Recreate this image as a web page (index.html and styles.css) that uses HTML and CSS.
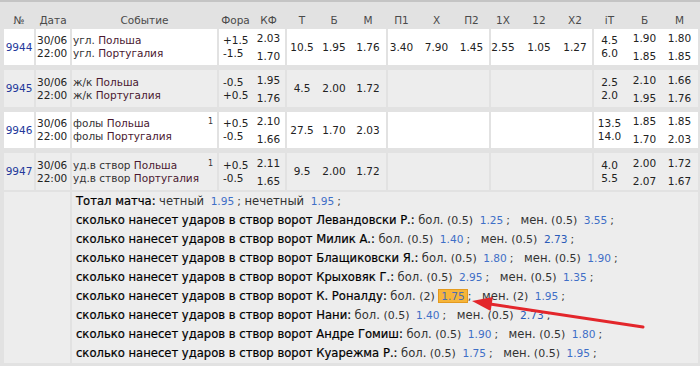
FILE: index.html
```html
<!DOCTYPE html>
<html lang="ru">
<head>
<meta charset="utf-8">
<title>Линия</title>
<link rel="stylesheet" href="styles.css">
</head>
<body>
<div class="wrap">
<table class="lines">
<colgroup><col class="ca"><col class="cb"><col class="cc"><col class="cd"><col class="ce"><col class="cf"><col class="cg"><col class="ch"></colgroup>
<thead>
<tr>
<th>№</th><th>Дата</th><th>Событие</th>
<th><div class="g gd"><div class="fo">Фора</div><div class="kf">КФ</div></div></th>
<th><div class="g ge"><div>Т</div><div>Б</div><div>М</div></div></th>
<th><div class="g gf"><div>П1</div><div>Х</div><div>П2</div></div></th>
<th><div class="g gg"><div>1Х</div><div>12</div><div>Х2</div></div></th>
<th><div class="g gh"><div>iT</div><div>Б</div><div>М</div></div></th>
</tr>
</thead>
<tbody>
<tr class="r r1 w">
<td class="id"><a>9944</a></td>
<td class="dt">30/06<br>22:00</td>
<td><div class="ev"><div><span class="pre">угл.</span> <span class="tm">Польша</span><br><span class="pre">угл.</span> <span class="tm">Португалия</span></div></div></td>
<td><div class="g gd"><div class="fo">+1.5<br>-1.5</div><div class="kf">2.03<br>1.70</div></div></td>
<td><div class="g ge"><div>10.5</div><div>1.95</div><div>1.76</div></div></td>
<td><div class="g gf"><div>3.40</div><div>7.90</div><div>1.45</div></div></td>
<td><div class="g gg"><div>2.55</div><div>1.05</div><div>1.27</div></div></td>
<td><div class="g gh"><div class="t">4.5<br>6.0</div><div class="s">1.90<br>1.85</div><div class="s">1.80<br>1.85</div></div></td>
</tr>
<tr class="r r2 b">
<td class="id"><a>9945</a></td>
<td class="dt">30/06<br>22:00</td>
<td><div class="ev"><div><span class="pre">ж/к</span> <span class="tm">Польша</span><br><span class="pre">ж/к</span> <span class="tm">Португалия</span></div></div></td>
<td><div class="g gd"><div class="fo">-0.5<br>+0.5</div><div class="kf">1.95<br>1.76</div></div></td>
<td><div class="g ge"><div>4.5</div><div>2.00</div><div>1.72</div></div></td>
<td></td>
<td></td>
<td><div class="g gh"><div class="t">2.5<br>2.0</div><div class="s">2.10<br>1.95</div><div class="s">1.66<br>1.76</div></div></td>
</tr>
<tr class="r r1 w">
<td class="id"><a>9946</a></td>
<td class="dt">30/06<br>22:00</td>
<td><div class="ev"><div><span class="pre">фолы</span> <span class="tm">Польша</span><br><span class="pre">фолы</span> <span class="tm">Португалия</span></div><span class="mark">1</span></div></td>
<td><div class="g gd"><div class="fo">+0.5<br>-0.5</div><div class="kf">2.10<br>1.66</div></div></td>
<td><div class="g ge"><div>27.5</div><div>1.70</div><div>2.03</div></div></td>
<td></td>
<td></td>
<td><div class="g gh"><div class="t">13.5<br>14.0</div><div class="s">1.85<br>1.70</div><div class="s">1.85<br>2.03</div></div></td>
</tr>
<tr class="r r4 b">
<td class="id"><a>9947</a></td>
<td class="dt">30/06<br>22:00</td>
<td><div class="ev"><div><span class="pre">уд.в створ</span> <span class="tm">Польша</span><br><span class="pre">уд.в створ</span> <span class="tm">Португалия</span></div><span class="mark">1</span></div></td>
<td><div class="g gd"><div class="fo">+0.5<br>-0.5</div><div class="kf">2.11<br>1.65</div></div></td>
<td><div class="g ge"><div>9.5</div><div>2.00</div><div>1.72</div></div></td>
<td></td>
<td></td>
<td><div class="g gh"><div class="t">4.0<br>5.5</div><div class="s">2.00<br>2.07</div><div class="s">1.72<br>1.67</div></div></td>
</tr>
<tr class="pn">
<td colspan="2" class="pl"></td>
<td colspan="6" class="pr">
<div class="ln"><span class="mk">Тотал матча:</span> <span class="wd">четный</span> <span class="od">1.95</span>; <span class="wd">нечетный</span> <span class="od">1.95</span>;</div>
<div class="ln"><span class="mk">сколько нанесет ударов в створ ворот Левандовски Р.:</span> <span class="wd">бол.</span> (0.5)&nbsp;<span class="od">1.25</span>;&nbsp;&nbsp; <span class="wd">мен.</span> (0.5)&nbsp;<span class="od">3.55</span>;</div>
<div class="ln"><span class="mk">сколько нанесет ударов в створ ворот Милик А.:</span> <span class="wd">бол.</span> (0.5)&nbsp;<span class="od">1.40</span>;&nbsp;&nbsp; <span class="wd">мен.</span> (0.5)&nbsp;<span class="od vis">2.73</span>;</div>
<div class="ln"><span class="mk">сколько нанесет ударов в створ ворот Блащиковски Я.:</span> <span class="wd">бол.</span> (0.5)&nbsp;<span class="od">1.80</span>;&nbsp;&nbsp; <span class="wd">мен.</span> (0.5)&nbsp;<span class="od">1.90</span>;</div>
<div class="ln"><span class="mk">сколько нанесет ударов в створ ворот Крыховяк Г.:</span> <span class="wd">бол.</span> (0.5)&nbsp;<span class="od">2.95</span>;&nbsp;&nbsp; <span class="wd">мен.</span> (0.5)&nbsp;<span class="od">1.35</span>;</div>
<div class="ln"><span class="mk">сколько нанесет ударов в створ ворот К. Роналду:</span> <span class="wd">бол.</span> (2) <span class="od hl">1.75</span>;&nbsp;&nbsp; <span class="wd">мен.</span> (2)&nbsp;<span class="od">1.95</span>;</div>
<div class="ln"><span class="mk">сколько нанесет ударов в створ ворот Нани:</span> <span class="wd">бол.</span> (0.5)&nbsp;<span class="od">1.40</span>;&nbsp;&nbsp; <span class="wd">мен.</span> (0.5)&nbsp;<span class="od vis">2.73</span>;</div>
<div class="ln"><span class="mk">сколько нанесет ударов в створ ворот Андре Гомиш:</span> <span class="wd">бол.</span> (0.5)&nbsp;<span class="od">1.90</span>;&nbsp;&nbsp; <span class="wd">мен.</span> (0.5)&nbsp;<span class="od">1.80</span>;</div>
<div class="ln"><span class="mk">сколько нанесет ударов в створ ворот Куарежма Р.:</span> <span class="wd">бол.</span> (0.5)&nbsp;<span class="od">1.75</span>;&nbsp;&nbsp; <span class="wd">мен.</span> (0.5)&nbsp;<span class="od">1.95</span>;</div>
</td>
</tr>
</tbody>
</table>
</div>
<svg class="arrow" width="700" height="366" viewBox="0 0 700 366" aria-hidden="true">
<line x1="643" y1="327" x2="490" y2="304" stroke="#e3262b" stroke-width="3" stroke-linecap="round"/>
<polygon points="472,301 492.8,297.1 490.7,310.9" fill="#e3262b"/>
</svg>
</body>
</html>
```
FILE: styles.css
```css
html, body {
  margin: 0;
  padding: 0;
}
body {
  position: relative;
  width: 700px;
  height: 366px;
  overflow: hidden;
  background: #e2e2e2;
  font-family: "DejaVu Sans", Verdana, sans-serif;
  font-size: 11px;
  color: #222;
}
.wrap {
  border-top: 2px solid #c4c4c4;
  padding-left: 2px;
}
.lines {
  border-collapse: separate;
  border-spacing: 2px 0;
  table-layout: fixed;
  width: 698px;
  font-size: 10.5px;
}
.ca { width: 30px; }
.cb { width: 34px; }
.cc { width: 145px; }
.cd { width: 66px; }
.ce { width: 99px; }
.cf { width: 101px; }
.cg { width: 101px; }
.ch { width: 104px; }

.lines th {
  box-sizing: border-box;
  height: 27px;
  padding: 12px 0 0;
  vertical-align: top;
  font-weight: normal;
  color: #4a4a4a;
  line-height: 13px;
  text-align: center;
  white-space: nowrap;
}
.r td {
  box-sizing: border-box;
  padding: 0;
  vertical-align: middle;
  border-bottom: 5px solid #e2e2e2;
  background-clip: padding-box;
  white-space: nowrap;
  line-height: 13px;
}
.r1 td { height: 41px; }
.r2 td { height: 42px; }
.r4 td { height: 39px; border-bottom-width: 2px; }
.w td { background-color: #fff; }
.b td { background-color: #ededed; }

.id { text-align: center; }
.id a { color: #24399b; }
.dt { padding-left: 1px !important; color: #222; }
.ev {
  display: flex;
  justify-content: space-between;
  padding: 0 4px 0 1px;
}
.pre { color: #333; }
.tm { color: #4a1830; }
.mark {
  align-self: flex-start;
  font-size: 8px;
  line-height: 9px;
  color: #333;
}

.g {
  display: flex;
  align-items: center;
}
.g > div { text-align: center; flex: none; }
.gd .fo { width: 33px; padding-left: 4px; box-sizing: border-box; text-align: left; }
.gd .kf { width: 33px; line-height: 18px; }
th .gd .fo { text-align: center; padding-left: 0; }
th .gd .kf { line-height: 13px; }
.ge > div { width: 34px; }
.ge > div:first-child { width: 30px; }
.gf { margin-left: -4px; }
.gf > div { width: 35px; }
.gg { margin-left: -6px; }
.gg > div { width: 36px; }
.gh { margin-left: -2px; }
.gh > div { width: 35px; }
.gh .t { line-height: 13px; }
.gh .s { line-height: 18px; }

.pn td {
  box-sizing: border-box;
  height: 171px;
  padding: 0;
  vertical-align: top;
  background: #ededed;
}
.pr {
  padding-left: 4px !important;
  line-height: 19px;
  font-size: 11px;
  color: #333;
  white-space: nowrap;
}
.mk {
  color: #000;
  font-size: 11.6px;
  -webkit-text-stroke: 0.2px #000;
}
.wd { font-size: 11.6px; }
.od { color: #3f6fc7; padding: 0 3px; font-size: 10.6px; }
.od.vis { color: #2a5bb8; }
.od.hl {
  background: #f6b53a;
  border: 1px solid #e49a1f;
  padding: 0 2px;
  color: #4f6fb0;
}
.arrow {
  position: absolute;
  left: 0;
  top: 0;
  pointer-events: none;
}
```
